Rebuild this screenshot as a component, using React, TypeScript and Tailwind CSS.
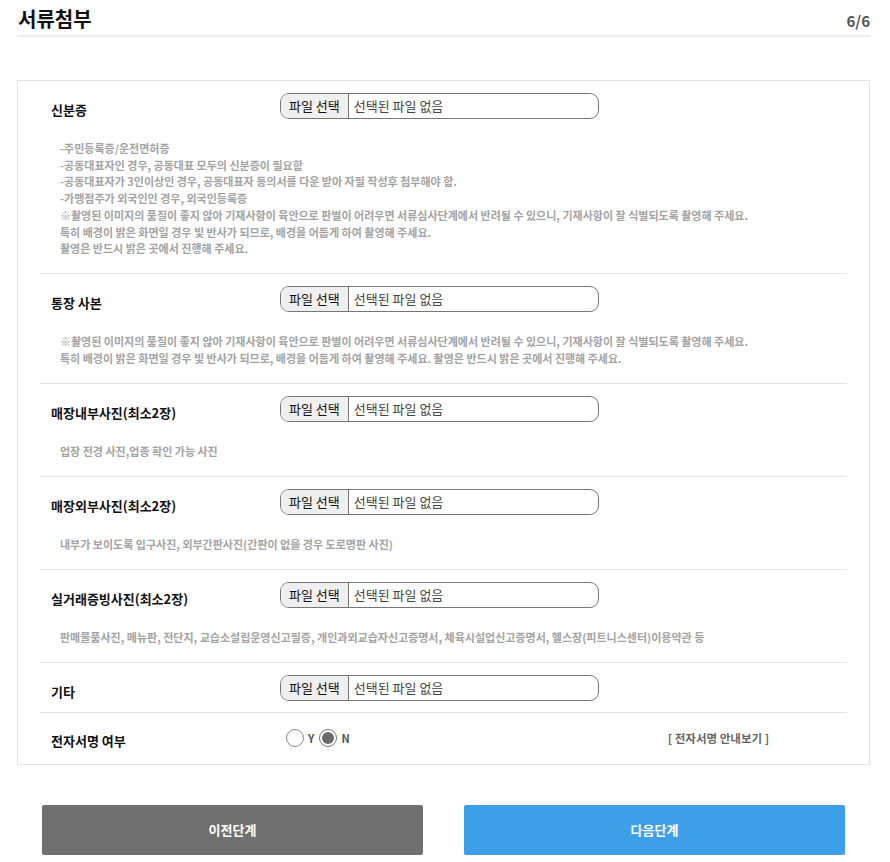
import React from "react";

const font = { fontFamily: '"Noto Sans CJK KR", "Noto Sans", sans-serif' };

interface DocRowProps {
  label: string;
  notes?: string[];
}

const FileBox = () => (
  <div className="flex h-[26px] w-[319px] items-stretch overflow-hidden rounded-[9px] border border-[#767676] bg-white">
    <span className="flex items-center border-r border-[#767676] bg-[#efefef] px-[8px] text-[13px] text-[#111]">
      파일 선택
    </span>
    <span className="flex items-center pl-[5px] text-[13px] text-[#444]">
      선택된 파일 없음
    </span>
  </div>
);

const DocRow = ({ label, notes = [] }: DocRowProps) => {
  return (
    <div
      className={`border-b border-[#e6e6e6] pt-[12px] ${notes.length ? "pb-[16.3px]" : "pb-[11px]"}`}
    >
      <div className="flex h-[26px] items-start">
        <div className="w-[240px] pl-[11px] pt-[8px] text-[13px] font-bold leading-[18px] text-[#111]">
          {label}
        </div>
        <FileBox />
      </div>
      {notes.length > 0 && (
        <div className="mt-[21px] pl-[20px] text-[11px] font-bold leading-[16.7px] text-[#a3a3a3]">
          {notes.map((n, i) => (
            <p key={i}>{n}</p>
          ))}
        </div>
      )}
    </div>
  );
};

const App = () => {
  const photoNote =
    "※촬영된 이미지의 품질이 좋지 않아 기재사항이 육안으로 판별이 어려우면 서류심사단계에서 반려될 수 있으니, 기재사항이 잘 식별되도록 촬영해 주세요.";

  return (
    <div className="min-h-[862px] w-full bg-white pl-[17px] pr-[20px]" style={font}>
      <div className="flex items-end justify-between border-b-2 border-[#eeeeee] pb-[4px] pl-[1px] pt-[7px]">
        <h2 className="text-[20px] font-bold leading-[24px] text-[#111]">서류첨부</h2>
        <span className="text-[15px] font-bold leading-[20px] text-[#555]">6/6</span>
      </div>

      <div className="mt-[43px] border border-[#e3e3e3] px-[22px]">
        <DocRow
          label="신분증"
          notes={[
            "-주민등록증/운전면허증",
            "-공동대표자인 경우, 공동대표 모두의 신분증이 필요함",
            "-공동대표자가 3인이상인 경우, 공동대표자 동의서를 다운 받아 자필 작성후 첨부해야 함.",
            "-가맹점주가 외국인인 경우, 외국인등록증",
            photoNote,
            "특히 배경이 밝은 화면일 경우 빛 반사가 되므로, 배경을 어둡게 하여 촬영해 주세요.",
            "촬영은 반드시 밝은 곳에서 진행해 주세요.",
          ]}
        />
        <DocRow
          label="통장 사본"
          notes={[
            photoNote,
            "특히 배경이 밝은 화면일 경우 빛 반사가 되므로, 배경을 어둡게 하여 촬영해 주세요. 촬영은 반드시 밝은 곳에서 진행해 주세요.",
          ]}
        />
        <DocRow label="매장내부사진(최소2장)" notes={["업장 전경 사진,업종 확인 가능 사진"]} />
        <DocRow
          label="매장외부사진(최소2장)"
          notes={["내부가 보이도록 입구사진, 외부간판사진(간판이 없을 경우 도로명판 사진)"]}
        />
        <DocRow
          label="실거래증빙사진(최소2장)"
          notes={[
            "판매물품사진, 메뉴판, 전단지, 교습소설립운영신고필증, 개인과외교습자신고증명서, 체육시설업신고증명서, 헬스장(피트니스센터)이용약관 등",
          ]}
        />
        <DocRow label="기타" />

        <div className="flex h-[51px] items-center">
          <div className="w-[240px] pl-[11px] pt-[4px] text-[13px] font-bold text-[#111]">
            전자서명 여부
          </div>
          <div className="ml-[6px] flex items-center">
            <span className="h-[18px] w-[18px] rounded-full border border-[#8a8a8a] bg-white" />
            <span className="ml-[4px] mr-[5px] text-[11px] font-bold text-[#555]">Y</span>
            <span className="flex h-[18px] w-[18px] items-center justify-center rounded-full border border-[#777]">
              <span className="h-[12px] w-[12px] rounded-full bg-[#6b6b6b]" />
            </span>
            <span className="ml-[4px] text-[11px] font-bold text-[#555]">N</span>
          </div>
          <span className="ml-auto mr-[78px] text-[11.5px] font-bold text-[#666]">
            [ 전자서명 안내보기 ]
          </span>
        </div>
      </div>

      <div className="mt-[40px] flex justify-between px-[25px]">
        <button className="h-[50px] w-[381px] rounded-[2px] bg-[#707070] text-[13px] font-bold text-white">
          이전단계
        </button>
        <button className="h-[50px] w-[381px] rounded-[2px] bg-[#3c9fe8] text-[13px] font-bold text-white">
          다음단계
        </button>
      </div>
    </div>
  );
};

export default App;
